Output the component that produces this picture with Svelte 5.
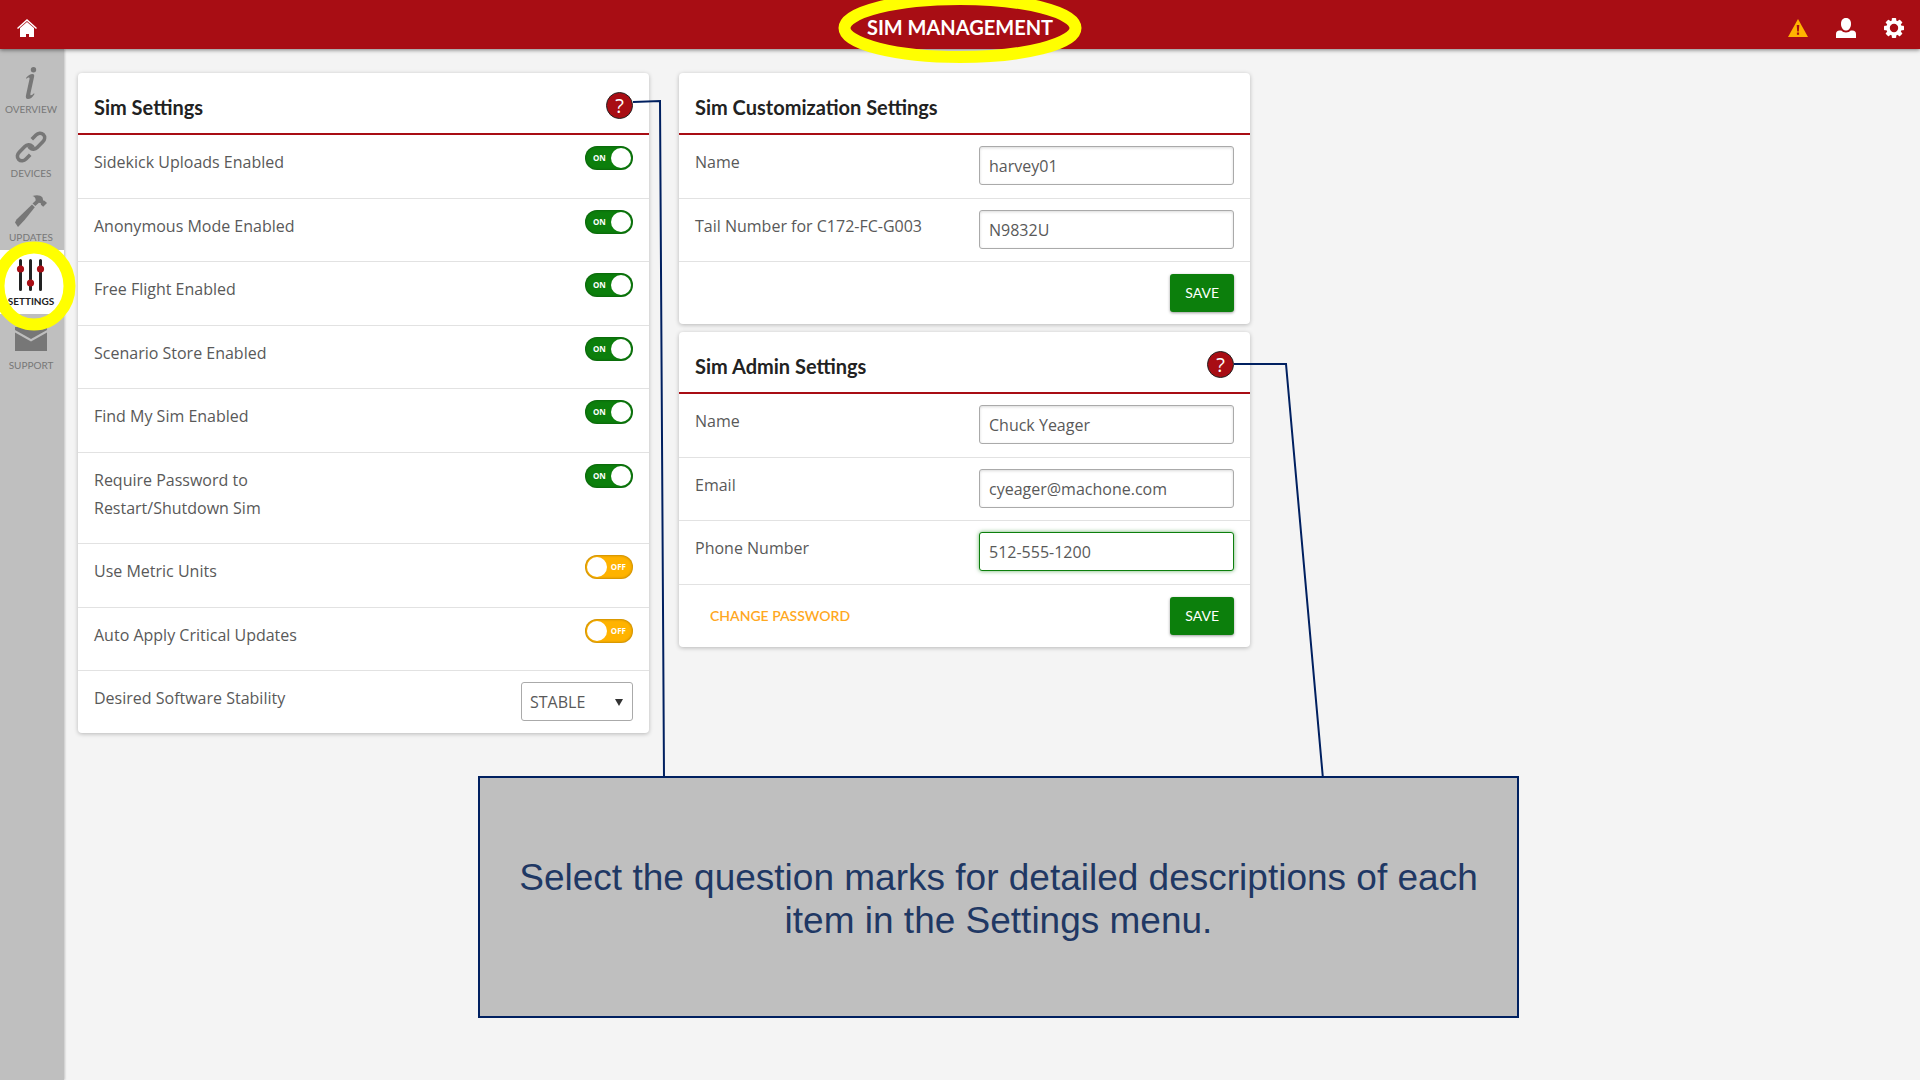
<script lang="ts">
  interface Toggle {
    id: string;
    label: string;
    on: boolean;
  }

  interface Field {
    id: string;
    label: string;
    value: string;
    type: string;
  }

  let toggles = $state<Toggle[]>([
    { id: 'uploads', label: 'Sidekick Uploads Enabled', on: true },
    { id: 'anonymous', label: 'Anonymous Mode Enabled', on: true },
    { id: 'free-flight', label: 'Free Flight Enabled', on: true },
    { id: 'store', label: 'Scenario Store Enabled', on: true },
    { id: 'find-sim', label: 'Find My Sim Enabled', on: true },
    { id: 'password', label: 'Require Password to Restart/Shutdown Sim', on: true },
    { id: 'metric', label: 'Use Metric Units', on: false },
    { id: 'auto-apply', label: 'Auto Apply Critical Updates', on: false }
  ]);

  let simFields = $state<Field[]>([
    { id: 'sim-name', label: 'Name', value: 'harvey01', type: 'text' },
    { id: 'tail-number', label: 'Tail Number for C172-FC-G003', value: 'N9832U', type: 'text' }
  ]);

  let adminFields = $state<Field[]>([
    { id: 'admin-name', label: 'Name', value: 'Chuck Yeager', type: 'text' },
    { id: 'admin-email', label: 'Email', value: 'cyeager@machone.com', type: 'email' },
    { id: 'admin-phone', label: 'Phone Number', value: '512-555-1200', type: 'tel' }
  ]);

  let stability = $state('STABLE');
  let activeField = $state('admin-phone');

  const navItems = ['Overview', 'Devices', 'Updates', 'Settings', 'Support'];
  let current = $state('Settings');
</script>

{#snippet fieldRow(field: Field)}
  <div class="row">
    <label for={field.id}>{field.label}</label>
    <input
      class="field"
      class:active={activeField === field.id}
      id={field.id}
      type={field.type}
      bind:value={field.value}
      onfocus={() => (activeField = field.id)}
    />
  </div>
{/snippet}

<div class="page">
  <header>
    <a class="icon-link" href="#home" aria-label="Home">
      <svg width="20" height="18" viewBox="0 0 20 18" fill="#fff">
        <path d="M10 0 20 9l-1 1-9-8-9 8-1-1z" />
        <path d="M10 3 17 9v9h-5v-3H9v3H3V9z" />
      </svg>
    </a>
    <h1>
      SIM MANAGEMENT
      <svg class="title-ring" width="244" height="70" viewBox="0 0 244 70" aria-hidden="true">
        <ellipse cx="122" cy="35" rx="115.500" ry="29" fill="none" stroke="#ff0" stroke-width="12" />
      </svg>
    </h1>
    <div class="tools">
      <button type="button" aria-label="Alerts">
        <svg width="20" height="20" viewBox="0 0 20 20">
          <path d="M10 1 20 19H0z" fill="#ffb300" />
          <path d="M8.700 7h2.600l-.5 6.500H9.200zM8.900 14.500h2.200v2.200H8.900z" fill="#a80d14" />
        </svg>
      </button>
      <button type="button" aria-label="Account">
        <svg width="20" height="20" viewBox="0 0 20 20" fill="#fff">
          <path d="M10 0c3.500 0 5 2.500 5 5.700 0 3.800-2 6.800-5 6.800S5 9.500 5 5.700C5 2.500 6.500 0 10 0z" />
          <path d="M5.300 12.500c1 1.300 2.700 2 4.700 2s3.700-.7 4.700-2h1.800c2.200 0 3.500 1.500 3.500 3.500v4H0v-4c0-2 1.300-3.500 3.500-3.500z" />
        </svg>
      </button>
      <button type="button" aria-label="Preferences">
        <svg width="20" height="20" viewBox="-10 -10 20 20" fill="#fff">
          {#each [0, 45, 90, 135] as angle}
            <rect x="-2.200" y="-10" width="4.400" height="5" rx="0.8" transform="rotate({angle})" />
            <rect x="-2.200" y="5" width="4.400" height="5" rx="0.8" transform="rotate({angle})" />
          {/each}
          <circle r="6" fill="none" stroke="#fff" stroke-width="3.600" />
        </svg>
      </button>
    </div>
  </header>

  <div class="body">
    <nav>
      {#each navItems as item}
        <a href="#{item.toLowerCase()}" class:current={current === item} onclick={() => (current = item)}>
          <svg width="32" height="32" viewBox="0 0 32 32" fill="currentColor" aria-hidden="true">
            {#if item === 'Overview'}
              <circle cx="18.500" cy="2.700" r="2.700" />
              <path d="M11 11c2-2.500 4.500-4 6.500-4 1.500 0 2 1 1.600 2.800l-3.600 16.500c-.3 1.400-.1 2 .5 2 .8 0 1.900-.8 3-2l.5.6C17.500 30.500 15 32 13 32c-2 0-2.500-1.600-2-3.800l3.400-15.600c.3-1.500.2-2.200-.5-2.200-.6 0-1.500.5-2.400 1.300z" />
            {:else if item === 'Devices'}
              <g fill="none" stroke="currentColor" stroke-width="3.600">
                <path d="M16.800 8.200l4.200-4.200c2-2 5.200-2.600 7.300-.5s1.500 5.300-.5 7.300l-5.600 5.600c-2 2-5.200 2.400-7.300.3a4 4 0 0 1-.9-1.300" />
                <path d="M15.200 23.800l-4.200 4.200c-2 2-5.200 2.600-7.300.5s-1.500-5.300.5-7.300l5.600-5.600c2-2 5.200-2.400 7.300-.3a4 4 0 0 1 .9 1.300" />
              </g>
            {:else if item === 'Updates'}
              <path d="M17.500 1c4-1.300 8-1 10 1.500l.7 3 1.300.3 2.500 2.200-3.800 3.800-2.300-2 0-1.600-2-.4L20.300 11l-2.800-2.600 3-2.700C21 3.500 20 1.800 17.500 1z" />
              <path d="M17 9.500l2.800 2.700L10 24.500 3 32 0 27.500l1.500-3z" />
            {:else if item === 'Settings'}
              <path d="M4 1.500a1.500 1.500 0 0 1 3 0v29a1.500 1.500 0 0 1-3 0zM14 1.500a1.500 1.500 0 0 1 3 0v29a1.500 1.500 0 0 1-3 0zM24 1.500a1.500 1.500 0 0 1 3 0v29a1.500 1.500 0 0 1-3 0z" />
              <g fill="#a80d14">
                <circle cx="5.500" cy="10" r="3.600" />
                <circle cx="15.500" cy="24" r="3.600" />
                <circle cx="25.500" cy="10" r="3.600" />
              </g>
            {:else}
              <path d="M0 4h32v3L16 16 0 7z" />
              <path d="M0 9.500l16 9 16-9V28H0z" />
            {/if}
          </svg>
          <span>{item}</span>
          {#if item === 'Settings'}
            <svg class="nav-ring" width="84" height="90" viewBox="0 0 84 90" aria-hidden="true">
              <ellipse cx="42" cy="45" rx="35.500" ry="38.500" fill="none" stroke="#ff0" stroke-width="12" />
            </svg>
          {/if}
        </a>
      {/each}
    </nav>

    <main>
      <div class="column">
        <section class="card">
          <div class="card-title">
            <h2>Sim Settings</h2>
            <button type="button" class="help" aria-label="Help with Sim Settings">?</button>
            <svg class="pointer" width="100" height="690" viewBox="0 0 100 690" aria-hidden="true">
              <path d="M0 11l27-1 4 676" fill="none" stroke="#002060" stroke-width="2" />
            </svg>
          </div>
          {#each toggles as toggle}
            <div class="row">
              <label for={toggle.id}>{toggle.label}</label>
              <span class="switch" class:on={toggle.on}>
                <input id={toggle.id} type="checkbox" bind:checked={toggle.on} />
                <span class="state">{toggle.on ? 'ON' : 'OFF'}</span>
              </span>
            </div>
          {/each}
          <div class="row">
            <label for="stability">Desired Software Stability</label>
            <span class="select">
              <select id="stability" bind:value={stability}>
                <option>STABLE</option>
                <option>BETA</option>
              </select>
              <svg width="8" height="7" viewBox="0 0 8 7" aria-hidden="true">
                <path d="M0 0h8L4 7z" fill="#333" />
              </svg>
            </span>
          </div>
        </section>
      </div>

      <div class="column">
        <section class="card">
          <div class="card-title">
            <h2>Sim Customization Settings</h2>
          </div>
          {#each simFields as field}
            {@render fieldRow(field)}
          {/each}
          <div class="row actions">
            <button type="button" class="save">SAVE</button>
          </div>
        </section>

        <section class="card">
          <div class="card-title">
            <h2>Sim Admin Settings</h2>
            <button type="button" class="help" aria-label="Help with Sim Admin Settings">?</button>
            <svg class="pointer" width="100" height="690" viewBox="0 0 100 690" aria-hidden="true">
              <path d="M0 14h52l37 415" fill="none" stroke="#002060" stroke-width="2" />
            </svg>
          </div>
          {#each adminFields as field}
            {@render fieldRow(field)}
          {/each}
          <div class="row actions">
            <button type="button" class="change">CHANGE PASSWORD</button>
            <button type="button" class="save">SAVE</button>
          </div>
        </section>
      </div>
    </main>
  </div>

  <aside class="callout">
    <p>Select the question marks for detailed descriptions of each item in the Settings menu.</p>
  </aside>
</div>

<style>
  :global(body) {
    background: #f4f4f4;
  }

  .page {
    position: relative;
    display: flex;
    flex-direction: column;
    min-height: 100vh;
    color: #595959;
    font-family: 'Open Sans', sans-serif;
    font-size: 16px;
    line-height: 28px;
  }

  button,
  input,
  select {
    box-sizing: border-box;
    margin: 0;
    font-family: inherit;
    font-size: inherit;
    color: inherit;
  }

  button {
    padding: 0;
    border: none;
    background: none;
    cursor: pointer;
  }

  header {
    position: relative;
    z-index: 2;
    display: grid;
    grid-template-columns: 1fr auto 1fr;
    align-items: center;
    height: 49px;
    padding: 0 16px;
    background: #a80d14;
    box-shadow: 0 1px 4px rgba(0, 0, 0, 0.5);
  }

  header svg {
    display: block;
  }

  .icon-link {
    justify-self: start;
    padding: 7px 0 0 1px;
  }

  h1 {
    position: relative;
    margin: 0;
    padding-top: 5px;
    color: #fff;
    font-family: Lato, sans-serif;
    font-size: 20px;
    font-weight: 700;
    line-height: 28px;
  }

  .title-ring {
    position: absolute;
    top: -15px;
    left: 50%;
    margin-left: -122px;
  }

  .tools {
    display: flex;
    justify-self: end;
    gap: 28px;
    padding-top: 7px;
  }

  .body {
    display: flex;
    flex: 1;
  }

  nav {
    position: relative;
    z-index: 1;
    width: 64px;
    padding-top: 9px;
    background: #bfbfbf;
    box-shadow: 1px 0 2px rgba(0, 0, 0, 0.2);
  }

  nav a {
    position: relative;
    display: flex;
    flex-direction: column;
    align-items: center;
    box-sizing: border-box;
    height: 64px;
    padding: 9px 2px 0 0;
    color: #777;
    font-family: Lato, sans-serif;
    font-size: 10px;
    line-height: 20px;
    text-decoration: none;
    text-transform: uppercase;
  }

  nav a.current {
    background: #fff;
    color: #222;
    font-weight: 700;
  }

  nav svg {
    flex: none;
  }

  .nav-ring {
    position: absolute;
    z-index: 1;
    top: -9px;
    left: -8px;
  }

  main {
    display: flex;
    flex: 1;
    align-items: flex-start;
    gap: 30px;
    padding: 24px 14px;
  }

  .column {
    display: flex;
    flex: 0 1 571px;
    flex-direction: column;
    gap: 8px;
  }

  .card {
    border-radius: 4px;
    background: #fff;
    box-shadow: 0 1px 4px rgba(0, 0, 0, 0.25);
  }

  .card-title {
    position: relative;
    display: flex;
    justify-content: space-between;
    align-items: flex-start;
    height: 60px;
    padding: 0 16px;
    border-bottom: 2px solid #a80d14;
  }

  h2 {
    margin: 0;
    padding-top: 20px;
    color: #222;
    font-family: Lato, sans-serif;
    font-size: 20px;
    font-weight: 700;
    line-height: 28px;
  }

  .help {
    width: 27px;
    height: 27px;
    margin-top: 19px;
    border: 1px solid #222;
    border-radius: 50%;
    background: #a80d14;
    color: #fff;
    font-size: 20px;
    line-height: 25px;
  }

  .pointer {
    position: absolute;
    z-index: 1;
    top: 18px;
    left: 100%;
    margin-left: -16px;
    pointer-events: none;
  }

  .row {
    display: flex;
    justify-content: space-between;
    align-items: flex-start;
    box-sizing: border-box;
    min-height: 63px;
    padding: 11px 16px 21px;
    border-bottom: 1px solid #e2e2e2;
  }

  .row:nth-child(even) {
    min-height: 64px;
  }

  .row:has(.field) {
    padding-bottom: 11px;
  }

  .row:last-child {
    min-height: 0;
    padding-bottom: 12px;
    border-bottom: none;
  }

  .row label {
    padding-top: 2px;
  }

  .row label:has(+ .switch) {
    max-width: 220px;
  }

  .switch {
    position: relative;
    display: flex;
  }

  .switch input {
    display: flex;
    width: 48px;
    height: 24px;
    padding: 2px;
    border-radius: 12px;
    background: #ffb300;
    box-shadow: inset 0 0 3px rgba(0, 0, 0, 0.4);
    appearance: none;
    cursor: pointer;
  }

  .switch input::before {
    width: 20px;
    height: 20px;
    border-radius: 50%;
    background: #fff;
    content: '';
  }

  .switch.on input {
    justify-content: flex-end;
    background: #0c7f0c;
  }

  .state {
    position: absolute;
    top: 0;
    right: 7px;
    color: #fff;
    font-size: 8px;
    font-weight: 700;
    line-height: 24px;
    pointer-events: none;
  }

  .switch.on .state {
    right: auto;
    left: 8px;
  }

  .field,
  select {
    height: 39px;
    padding: 0 8px;
    border: 1px solid #aaa;
    border-radius: 3px;
    background: #fff;
    outline: none;
  }

  .field {
    width: 255px;
    padding-left: 9px;
    box-shadow: inset 0 1px 3px rgba(0, 0, 0, 0.15);
  }

  .field.active {
    border-color: #0c7f0c;
    box-shadow: 0 0 4px rgba(12, 127, 12, 0.6);
  }

  .select {
    position: relative;
    display: flex;
  }

  select {
    width: 112px;
    appearance: none;
  }

  .select svg {
    position: absolute;
    top: 17px;
    right: 10px;
    pointer-events: none;
  }

  .actions {
    justify-content: flex-end;
    padding-top: 12px;
  }

  .save,
  .change {
    height: 38px;
    padding: 0 15px;
    border-radius: 3px;
    font-family: Lato, sans-serif;
    font-size: 14px;
    line-height: 38px;
  }

  .save {
    background: #0c7f0c;
    box-shadow: 0 1px 3px rgba(0, 0, 0, 0.4);
    color: #fff;
  }

  .change {
    margin-right: auto;
    color: #ffa81f;
    font-weight: 600;
  }

  .callout {
    position: absolute;
    z-index: 3;
    top: 776px;
    left: 478px;
    display: flex;
    align-items: center;
    box-sizing: border-box;
    width: 1041px;
    height: 242px;
    padding: 4px 24px 0;
    border: 2px solid #002060;
    background: #bfbfbf;
  }

  .callout p {
    flex: 1;
    margin: 0;
    color: #1f3864;
    font-family: 'Liberation Sans', Helvetica, Arial, sans-serif;
    font-size: 37px;
    line-height: 43px;
    text-align: center;
  }
</style>
